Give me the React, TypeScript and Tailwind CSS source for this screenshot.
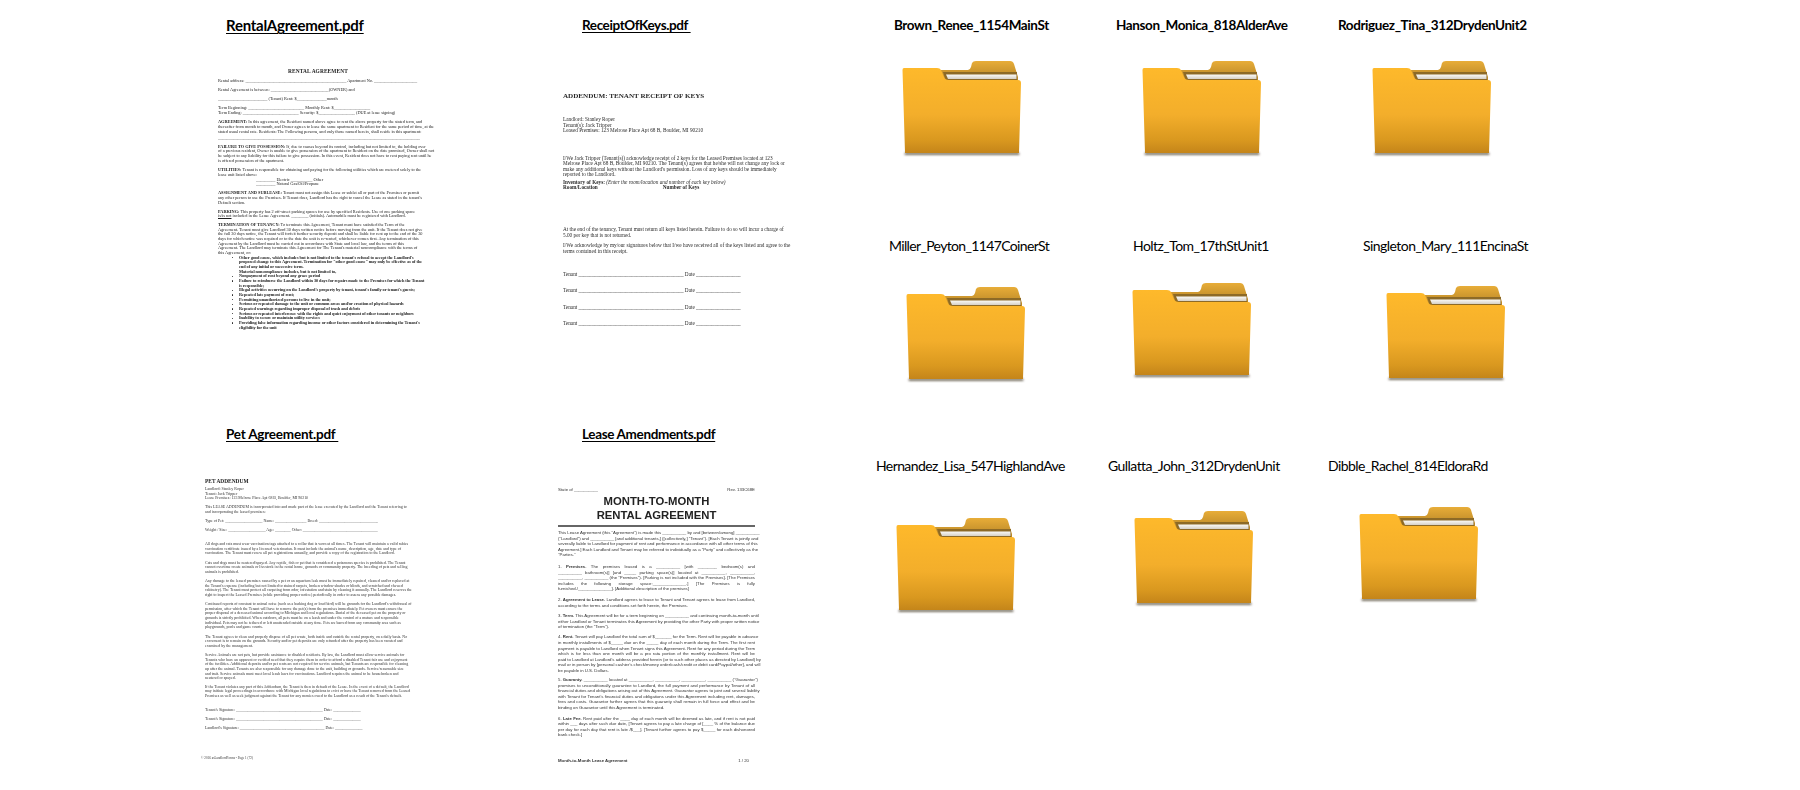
import React from 'react';

const FolderIcon: React.FC<{ id: string }> = ({ id }) => (
    <svg width="120" height="97" viewBox="0 0 120 97" className="block">
        <defs>
            <linearGradient id={`${id}-front`} x1="0" y1="0" x2="0" y2="1">
                <stop offset="0" stopColor="#feb92b" />
                <stop offset="0.55" stopColor="#f3ae2b" />
                <stop offset="0.85" stopColor="#d9981f" />
                <stop offset="1" stopColor="#c4851a" />
            </linearGradient>
            <linearGradient id={`${id}-back`} x1="0" y1="0" x2="0" y2="1">
                <stop offset="0" stopColor="#e8ad38" />
                <stop offset="1" stopColor="#a97a22" />
            </linearGradient>
            <linearGradient id={`${id}-paper`} x1="0" y1="0" x2="0" y2="1">
                <stop offset="0" stopColor="#fbfaf6" />
                <stop offset="1" stopColor="#d5d0c6" />
            </linearGradient>
            <filter id={`${id}-soft`} x="-5%" y="-50%" width="110%" height="200%">
                <feGaussianBlur stdDeviation="0.8" />
            </filter>
        </defs>
        <path d="M3 91.5 H117 L117.5 94 H2.5 Z" fill="#5f5645" opacity="0.85" filter={`url(#${id}-soft)`} />
        <path
            d="M36 9 H66 Q68 9 69 6 L70 2 Q71 0 74 0 H108 Q111 0 112 3 L116 16 V24 H36 Z"
            fill={`url(#${id}-back)`}
        />
        <path d="M41 11 H115 V20 H44 Z" fill="#8d6a26" />
        <path d="M44 13.5 H114.5 V18 H46 Z" fill={`url(#${id}-paper)`} />
        <path
            d="M2 7 H35 Q38 7 39 9 L42 16 Q43 19 47 19 H116 Q119 19 119 22 L117 92 H3 L0.5 9 Q0.5 7 2 7 Z"
            fill={`url(#${id}-front)`}
        />
    </svg>
);

const P: React.FC<{ className?: string; lines: React.ReactNode[] }> = ({ className, lines }) => (
    <div className={className}>
        {lines.map((line, i) => (
            <div key={i} className="whitespace-nowrap">
                {line}
            </div>
        ))}
    </div>
);

// lines of the justified lease are stretched to the full column
const J: React.FC<{ className?: string; lines: React.ReactNode[] }> = ({ className, lines }) => (
    <div className={className}>
        {lines.map((line, i) => (
            <div
                key={i}
                className={i === lines.length - 1 ? 'whitespace-nowrap' : 'whitespace-nowrap [text-align:justify] [text-align-last:justify]'}
            >
                {line}
            </div>
        ))}
    </div>
);

const RentalDoc = () => (
    <div className="mt-[35px] ml-[18px] w-[200px] font-['Liberation_Serif',serif] text-[4.3px] leading-[4.65px] text-[#1c1c1c] blur-[0.3px]">
        <div className="text-center text-[5.4px] font-bold tracking-[0.1px]">RENTAL AGREEMENT</div>
        <P className="mt-[5px]" lines={['Rental address: _______________________________________________ Apartment No. ____________________']} />
        <P className="mt-[4.5px]" lines={['Rental Agreement is between: ___________________________(OWNER)  and']} />
        <P className="mt-[4.5px]" lines={['_______________________ (Tenant)   Rent: $______________month']} />
        <P
            className="mt-[4.5px]"
            lines={[
                'Term Beginning:  __________________________      Monthly Rent:    $_________________',
                'Term Ending:      __________________________      Security:           $_________________ (DUE at lease signing)',
            ]}
        />
        <P
            className="mt-[5px]"
            lines={[
                <><b>AGREEMENT:</b>  In this agreement, the Resident named above agree to rent the above property for the stated term, and</>,
                'thereafter from month to month, and Owner agrees to lease the same apartment to Resident for the same period of time, at the',
                'stated usual rental rate.  Residents:  The Following persons, and only those named herein, shall reside in this apartment:',
            ]}
        />
        <P className="mt-[2px]" lines={['______________________________________________________________________________________________']} />
        <P
            className="mt-[3.5px]"
            lines={[
                <><b>FAILURE TO GIVE POSSESSION:</b> If, due to causes beyond its control, including but not limited to, the holding over</>,
                'of a previous resident, Owner is unable to give possession of the apartment to Resident on the date promised, Owner shall not',
                'be subject to any liability for this failure to give possession.  In this event, Resident does not have to rent paying rent until he',
                'is offered possession of the apartment.',
            ]}
        />
        <P
            className="mt-[5px]"
            lines={[
                <><b>UTILITIES:</b>  Tenant is responsible for obtaining and paying for the following utilities which are metered solely to the</>,
                'lease unit listed above:',
            ]}
        />
        <P
            lines={[
                <span className="ml-[38px]">_________ Electric                                           __________ Other</span>,
                <span className="ml-[38px]">_________ Natural Gas/Oil/Propane</span>,
            ]}
        />
        <P
            className="mt-[4.5px]"
            lines={[
                <><b>ASSIGNMENT AND SUBLEASE:</b>  Tenant must not assign this Lease or sublet all or part of the Premises or permit</>,
                'any other person to use the Premises.  If Tenant does, Landlord has the right to cancel the Lease as stated in the tenant\'s',
                'Default section.',
            ]}
        />
        <P
            className="mt-[4.5px]"
            lines={[
                <><b>PARKING:</b>  This property has 2 off-street parking spaces for use by specified Residents.  Use of one parking space</>,
                <><u>is/is not</u> included in the Lease Agreement.  ________ (initials).  Automobile must be registered with Landlord.</>,
            ]}
        />
        <P
            className="mt-[4px]"
            lines={[
                <><b>TERMINATION OF TENANCY:</b> To terminate this Agreement, Tenant must have satisfied the Term of the</>,
                'Agreement.  Tenant must give Landlord 30 days written notice before moving from the unit. If the Tenant does not give',
                'the full 30 days notice, the Tenant will forfeit further security deposit and shall be liable for rent up to the end of the 30',
                'days for which notice was required or to the date the unit is re-rented, whichever comes first. Any termination of this',
                'Agreement by the Landlord must be carried out in accordance with State and local law, and the terms of this',
                'Agreement. The Landlord may terminate this Agreement for The Tenant\'s material noncompliance with the terms of',
                'this Agreement, or:',
            ]}
        />
        <ul className="ml-[14px] list-none">
            {[
                ['Other good cause, which includes but is not limited to the tenant\'s refusal to accept the Landlord\'s', 'proposed change to this Agreement. Termination for "other good cause" may only be effective as of the', 'end of any initial or successive term.', 'Material noncompliance includes, but is not limited to,'],
                ['Nonpayment of rent beyond any grace period'],
                ['Failure to reimburse the Landlord within 30 days for repairs made to the Premises for which the Tenant', 'is responsible;'],
                ['Illegal activities occurring on the Landlord\'s property by tenant, tenant\'s family or tenant\'s guests;'],
                ['Repeated late payment of rent;'],
                ['Permitting unauthorized persons to live in the unit;'],
                ['Serious or repeated damage to the unit or common areas and/or creation of physical hazards'],
                ['Repeated warnings regarding improper disposal of trash and debris'],
                ['Serious or repeated interference with the rights and quiet enjoyment of other tenants or neighbors'],
                ['Inability to secure or maintain utility services'],
                ['Providing false information regarding income or other factors considered in determining the Tenant\'s', 'eligibility for the unit'],
            ].map((item, i) => (
                <li key={i} className="relative whitespace-nowrap pl-[7px] font-bold tracking-[-0.05px]">
                    <span className="absolute left-0 top-[1.5px] h-[1.3px] w-[1.3px] rounded-full bg-[#222]" />
                    {item.map((l, k) => (
                        <div key={k}>{l}</div>
                    ))}
                </li>
            ))}
        </ul>
    </div>
);

const KeysDoc = () => (
    <div className="mt-[58px] ml-[13px] w-[240px] font-['Liberation_Serif',serif] text-[5.25px] leading-[5.5px] text-[#2a2a2a] blur-[0.3px]">
        <div className="text-[7.1px] font-bold leading-[8px]">ADDENDUM: TENANT RECEIPT OF KEYS</div>
        <P
            className="mt-[17px]"
            lines={['Landlord:  Stanley Roper', 'Tenant(s):  Jack Tripper', 'Leased Premises: 123 Melrose Place Apt 68 B, Boulder, MI 90210']}
        />
        <P
            className="mt-[22px]"
            lines={[
                'I/We Jack Tripper (Tenant(s)) acknowledge receipt of 2 keys for the Leased Premises located at 123',
                'Melrose Place Apt 68 B, Boulder, MI 90210. The Tenant(s) agrees that he/she will not change any lock or',
                'make any additional keys without the Landlord\'s permission. Loss of any keys should be immediately',
                'reported to the Landlord.',
            ]}
        />
        <P
            className="mt-[2px]"
            lines={[
                <><b>Inventory of Keys:</b> <i>(Enter the room/location and number of each key below)</i></>,
                <b>Room/Location<span className="ml-[65px]">Number of Keys</span></b>,
            ]}
        />
        <P
            className="mt-[36.5px]"
            lines={[
                'At the end of the tenancy, Tenant must return all keys listed herein. Failure to do so will incur a charge of',
                '5.00 per key that is not returned.',
            ]}
        />
        <P
            className="mt-[5px]"
            lines={[
                'I/We acknowledge by my/our signatures below that I/we have received all of the keys listed and agree to the',
                'terms contained in this receipt.',
            ]}
        />
        <div className="mt-[17.5px] flex flex-col gap-[11px]">
            {[0, 1, 2, 3].map(i => (
                <div key={i} className="whitespace-nowrap">
                    Tenant ________________________________________ Date _________________
                </div>
            ))}
        </div>
    </div>
);

const PetDoc = () => (
    <div className="mt-[35px] ml-[5px] w-[197px] font-['Liberation_Serif',serif] text-[3.95px] leading-[4.65px] text-[#333] blur-[0.3px]">
        <div className="text-[5.4px] font-bold leading-[6px] text-[#222]">PET ADDENDUM</div>
        <P className="mt-[3px]" lines={['Landlord: Stanley Roper', 'Tenant: Jack Tripper', 'Lease Premises: 123 Melrose Place Apt 68 B, Boulder, MI 90210']} />
        <P
            className="mt-[4.5px]"
            lines={[
                'This LEASE ADDENDUM is incorporated into and made part of the lease executed by the Landlord and the Tenant referring to',
                'and incorporating the leased premises:',
            ]}
        />
        <P className="mt-[4.5px]" lines={['Type of Pet: ___________________   Name: ________________   Breed: ______________________________']} />
        <P className="mt-[4.5px]" lines={['Weight / Size: ___________________   Age: ________   Other: ______________________________________']} />
        <P
            className="mt-[9px]"
            lines={[
                'All dogs and cats must wear vaccination tags attached to a collar that is worn at all times. The Tenant will maintain a valid rabies',
                'vaccination certificate issued by a licensed veterinarian. It must include the animal\'s name, description, age, date and type of',
                'vaccination. The Tenant must renew all pet registrations annually, and provide a copy of the registration to the Landlord.',
            ]}
        />
        <P
            className="mt-[4.5px]"
            lines={[
                'Cats and dogs must be neutered/spayed. Any reptile, fish or pet that is considered a poisonous species is prohibited. The Tenant',
                'cannot overtime create animals or livestock in the rental home, grounds or community property. The breeding of pets and selling',
                'animals is prohibited.',
            ]}
        />
        <P
            className="mt-[4.5px]"
            lines={[
                'Any damage to the leased premises caused by a pet or an aquarium leak must be immediately repaired, cleaned and/or replaced at',
                'the Tenant\'s expense (including but not limited to stained carpets, broken window shades or blinds, and scratched and chewed',
                'cabinetry). The Tenant must protect all carpeting from odor, infestation and stain by cleaning it annually. The Landlord reserves the',
                'right to inspect the Leased Premises (while providing proper notice) periodically in order to assess any possible damages.',
            ]}
        />
        <P
            className="mt-[4.5px]"
            lines={[
                'Continued reports of constant to animal noise (such as a barking dog or loud bird) will be grounds for the Landlord\'s withdrawal of',
                'permission, after which the Tenant will have to remove the pet(s) from the premises immediately. Pet owners must ensure the',
                'proper disposal of a deceased animal according to Michigan and local regulations. Burial of the deceased pet on the property or',
                'grounds is strictly prohibited. When outdoors, all pets must be on a leash and under the control of a mature and responsible',
                'individual. Pets may not be tethered or left unattended outside at any time. Pets are barred from any community area such as',
                'playgrounds, pools and game courts.',
            ]}
        />
        <P
            className="mt-[4.5px]"
            lines={[
                'The Tenant agrees to clean and properly dispose of all pet waste, both inside and outside the rental property, on a daily basis. No',
                'excrement is to remain on the grounds. Security and/or pet deposits are only refunded after the property has been vacated and',
                'examined by the management.',
            ]}
        />
        <P
            className="mt-[4.5px]"
            lines={[
                'Service Animals are not pets, but provide assistance to disabled residents. By law, the Landlord must allow service animals for',
                'Tenants who have an apparent or verified need that they require them in order to afford a disabled Tenant fair use and enjoyment',
                'of the facilities. Additional deposits and/or pet rents are not required for service animals, but Tenants are responsible for cleaning',
                'up after the animal. Tenants are also responsible for any damage done to the unit, building or grounds. Service/reasonable size',
                'and trait. Service animals must meet local leash laws for vaccinations. Landlord requires the animal to be housebroken and',
                'neutered or spayed.',
            ]}
        />
        <P
            className="mt-[3.5px]"
            lines={[
                'If the Tenant violates any part of this Addendum, the Tenant is then in default of the Lease. In the event of a default, the Landlord',
                'may initiate legal proceedings in accordance with Michigan local regulations to evict or have the Tenant removed from the Leased',
                'Premises as well as seek judgment against the Tenant for any monies owed to the Landlord as a result of the Tenant\'s default.',
            ]}
        />
        <P className="mt-[9.5px]" lines={["Tenant's Signature: ____________________________________________ Date: ______________"]} />
        <P className="mt-[4.5px]" lines={["Tenant's Signature: ____________________________________________ Date: ______________"]} />
        <P className="mt-[4.5px]" lines={["Landlord's Signature: ___________________________________________ Date: ______________"]} />
        <div className="mt-[25px] -ml-[4px] text-[3.2px] tracking-[0.05px]">© 2016 asLandlordForms - Page 1 (72)</div>
    </div>
);

const LeaseDoc = () => (
    <div className="mt-[44px] ml-[8px] w-[197px] font-['Liberation_Sans',sans-serif] text-[4.3px] leading-[5.6px] text-[#333] blur-[0.3px]">
        <div className="flex justify-between">
            <span>State of __________</span>
            <span>Rev. 133C68E</span>
        </div>
        <div className="mt-[1px] text-center text-[11.3px] font-bold leading-[14.2px] text-[#222]">
            <div>MONTH-TO-MONTH</div>
            <div>RENTAL AGREEMENT</div>
        </div>
        <div className="mt-[2.5px] h-[2px] bg-[#666]" />
        <J
            className="mt-[3.5px]"
            lines={[
                'This Lease Agreement (this "Agreement") is made this __________ by and [between/among] __________',
                '("Landlord") and __________ [and additional tenants,] ([collectively,] "Tenant"). [Each Tenant is jointly and',
                'severally liable to Landlord for payment of rent and performance in accordance with all other terms of this',
                'Agreement.] Each Landlord and Tenant may be referred to individually as a "Party" and collectively as the',
                '"Parties."',
            ]}
        />
        <J
            className="mt-[6px]"
            lines={[
                <>1. <b>Premises.</b> The premises leased is a __________ [with ________ bedroom(s) and</>,
                '__________ bathroom(s)] [and _____ parking space(s)] located at __________, __________,',
                '__________, __________ (the "Premises"). [Parking is not included with the Premises]. [The Premises',
                'includes the following storage space:______________.] [The Premises is fully',
                'furnished./______________]. [Additional description of the premises]',
            ]}
        />
        <J
            className="mt-[5.5px]"
            lines={[
                <>2. <b>Agreement to Lease.</b> Landlord agrees to lease to Tenant and Tenant agrees to lease from Landlord,</>,
                'according to the terms and conditions set forth herein, the Premises.',
            ]}
        />
        <J
            className="mt-[4.5px]"
            lines={[
                <>3. <b>Term.</b> This Agreement will be for a term beginning on __________ and continuing month-to-month until</>,
                'either Landlord or Tenant terminates this Agreement by providing the other Party with proper written notice',
                'of termination (the "Term").',
            ]}
        />
        <J
            className="mt-[4.5px]"
            lines={[
                <>4. <b>Rent.</b> Tenant will pay Landlord the total sum of $_______ for the Term. Rent will be payable in advance</>,
                'in monthly installments of $_____ due on the _____ day of each month during the Term. The first rent',
                'payment is payable to Landlord when Tenant signs this Agreement. Rent for any period during the Term',
                'which is for less than one month will be a pro rata portion of the monthly installment. Rent will be',
                'paid to Landlord at Landlord\'s address provided herein (or to such other places as directed by Landlord) by',
                'mail or in person by [personal cashier\'s check/money order/cash/credit or debit card/Paypal/other], and will',
                'be payable in U.S. Dollars.',
            ]}
        />
        <J
            className="mt-[3.5px]"
            lines={[
                <>5. <b>Guaranty.</b> __________ located at __________, __________, __________, __________ ("Guarantor")</>,
                'promises to unconditionally guarantee to Landlord, the full payment and performance by Tenant of all',
                'financial duties and obligations arising out of this Agreement. Guarantor agrees to joint and several liability',
                'with Tenant for Tenant\'s financial duties and obligations under this Agreement including rent, damages,',
                'fees and costs. Guarantor further agrees that this guaranty shall remain in full force and effect and be',
                'binding on Guarantor until this Agreement is terminated.',
            ]}
        />
        <J
            className="mt-[5px]"
            lines={[
                <>6. <b>Late Fee.</b> Rent paid after the ____ day of each month will be deemed as late, and if rent is not paid</>,
                'within ___ days after such due date, [Tenant agrees to pay a late charge of [____ % of the balance due',
                'per day for each day that rent is late /$___]. [Tenant further agrees to pay $_____ for each dishonored',
                'bank check.]',
            ]}
        />
        <div className="mt-[20px] flex justify-between pr-[6px]">
            <b>Month-to-Month Lease Agreement</b>
            <span>1 / 20</span>
        </div>
    </div>
);

const PdfCell: React.FC<{ title: string; titleClass: string; children: React.ReactNode }> = ({ title, titleClass, children }) => (
    <div className="flex flex-col items-start">
        <div className={`font-['Lato',sans-serif] font-bold leading-[18px] text-black underline underline-offset-2 decoration-1 whitespace-pre ${titleClass}`}>
            {title}
        </div>
        {children}
    </div>
);

type FolderCell = { name: string; labelClass: string; folderClass: string };

const folders: FolderCell[] = [
    { name: 'Brown_Renee_1154MainSt', labelClass: 'ml-[34px] font-bold text-[13.5px] tracking-[-0.4px]', folderClass: 'ml-[42px] mt-[27px]' },
    { name: 'Hanson_Monica_818AlderAve', labelClass: 'ml-[16px] font-bold text-[13.5px] tracking-[-0.4px]', folderClass: 'ml-[42px] mt-[27px]' },
    { name: 'Rodriguez_Tina_312DrydenUnit2', labelClass: 'ml-[18px] font-bold text-[13.5px] tracking-[-0.4px]', folderClass: 'ml-[52px] mt-[27px]' },
    { name: 'Miller_Peyton_1147CoinerSt', labelClass: 'ml-[29px] font-normal text-[14px] tracking-[-0.65px]', folderClass: 'ml-[46px] mt-[32px]' },
    { name: 'Holtz_Tom_17thStUnit1', labelClass: 'ml-[33px] font-normal text-[14px] tracking-[-0.55px]', folderClass: 'ml-[32px] mt-[28px]' },
    { name: 'Singleton_Mary_111EncinaSt', labelClass: 'ml-[43px] font-normal text-[14px] tracking-[-0.55px]', folderClass: 'ml-[66px] mt-[31px]' },
    { name: 'Hernandez_Lisa_547HighlandAve', labelClass: 'ml-[16px] font-normal text-[14px] tracking-[-0.6px]', folderClass: 'ml-[36px] mt-[43px]' },
    { name: 'Gullatta_John_312DrydenUnit', labelClass: 'ml-[8px] font-normal text-[14px] tracking-[-0.55px]', folderClass: 'ml-[34px] mt-[36px]' },
    { name: 'Dibble_Rachel_814EldoraRd', labelClass: 'ml-[8px] font-normal text-[14px] tracking-[-0.55px]', folderClass: 'ml-[39px] mt-[32px]' },
];

const App: React.FC = () => {
    return (
        <div className="flex h-screen w-screen overflow-hidden bg-white pl-[200px] pt-[16px]">
            <div className="grid w-[660px] shrink-0 grid-cols-[350px_310px] grid-rows-[409px_1fr]">
                <PdfCell title="RentalAgreement.pdf" titleClass="ml-[26px] text-[15px] tracking-[-0.26px]">
                    <RentalDoc />
                </PdfCell>
                <PdfCell title="ReceiptOfKeys.pdf " titleClass="ml-[32px] text-[13.5px] tracking-[-0.4px]">
                    <KeysDoc />
                </PdfCell>
                <PdfCell title="Pet Agreement.pdf " titleClass="ml-[26px] text-[13.5px] tracking-[-0.22px]">
                    <PetDoc />
                </PdfCell>
                <PdfCell title="Lease Amendments.pdf" titleClass="ml-[32px] text-[13.5px] tracking-[-0.35px]">
                    <LeaseDoc />
                </PdfCell>
            </div>
            <div className="grid grid-cols-[240px_220px_240px] grid-rows-[221px_220px_220px]">
                {folders.map((f, i) => (
                    <div key={f.name} className="flex flex-col items-start">
                        <div className={`font-['Lato',sans-serif] leading-[18px] text-black whitespace-nowrap ${f.labelClass}`}>{f.name}</div>
                        <div className={f.folderClass}>
                            <FolderIcon id={`folder-${i}`} />
                        </div>
                    </div>
                ))}
            </div>
        </div>
    );
};

export default App;
